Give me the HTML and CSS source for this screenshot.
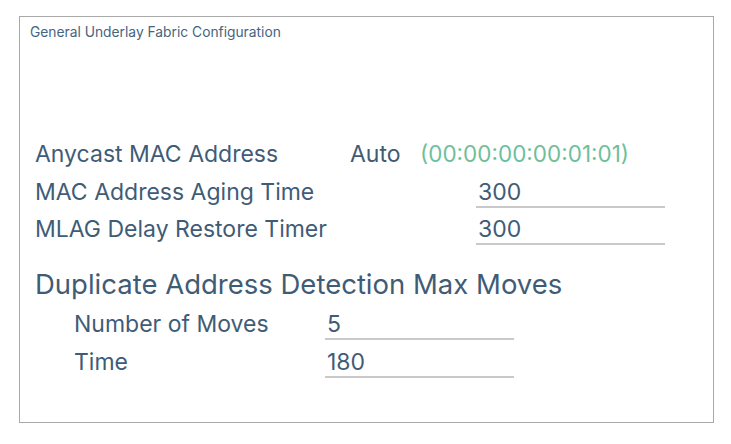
FILE: index.html
```html
<!DOCTYPE html>
<html lang="en">
<head>
<meta charset="utf-8">
<title>General Underlay Fabric Configuration</title>
<link rel="stylesheet" href="styles.css">
</head>
<body>
<section class="panel">
  <div class="panel-title">General Underlay Fabric Configuration</div>
  <div class="fields">
    <div class="row">
      <span class="label label-short">Anycast MAC Address</span>
      <span class="auto">Auto</span>
      <span class="mac">(00:00:00:00:01:01)</span>
    </div>
    <div class="row">
      <span class="label">MAC Address Aging Time</span>
      <span class="input">300</span>
    </div>
    <div class="row">
      <span class="label">MLAG Delay Restore Timer</span>
      <span class="input">300</span>
    </div>
    <h2 class="section-heading">Duplicate Address Detection Max Moves</h2>
    <div class="sub">
      <div class="row">
        <span class="label label-sub">Number of Moves</span>
        <span class="input">5</span>
      </div>
      <div class="row">
        <span class="label label-sub">Time</span>
        <span class="input">180</span>
      </div>
    </div>
  </div>
</section>
</body>
</html>
```
FILE: styles.css
```css
* { box-sizing: border-box; }

html, body {
  margin: 0;
  padding: 0;
  background: #ffffff;
}

body {
  font-family: "Inter", "Noto Sans", sans-serif;
  color: #3f5c77;
}

.panel {
  margin: 16px 0 0 19px;
  width: 695px;
  height: 407px;
  border: 1px solid #a9a9a9;
  padding: 7px 0 0 10px;
}

.panel-title {
  font-size: 13.8px;
  line-height: 16px;
  color: #46647f;
}

.fields {
  margin-top: 100px;
  padding-left: 5px;
  display: flex;
  flex-direction: column;
  gap: 7.5px;
}

.row {
  display: flex;
  align-items: flex-start;
  height: 30px;
  font-size: 23px;
  line-height: 28px;
}

.label {
  width: 441px;
  flex: none;
  white-space: nowrap;
}

.label-short { width: 315px; }

.auto {
  width: 70px;
  flex: none;
}

.mac {
  color: #6fbf9c;
  font-size: 22.5px;
  white-space: nowrap;
}

.input {
  width: 189px;
  height: 30px;
  flex: none;
  padding-left: 2px;
  border-bottom: 2px solid #c9c9c9;
}

.section-heading {
  margin: 14px 0 0 0;
  font-size: 27.5px;
  line-height: 34px;
  font-weight: 400;
  white-space: nowrap;
}

.sub {
  display: flex;
  flex-direction: column;
  gap: 8px;
  padding-left: 39px;
  margin-top: 2px;
}

.label-sub { width: 251px; }
```
